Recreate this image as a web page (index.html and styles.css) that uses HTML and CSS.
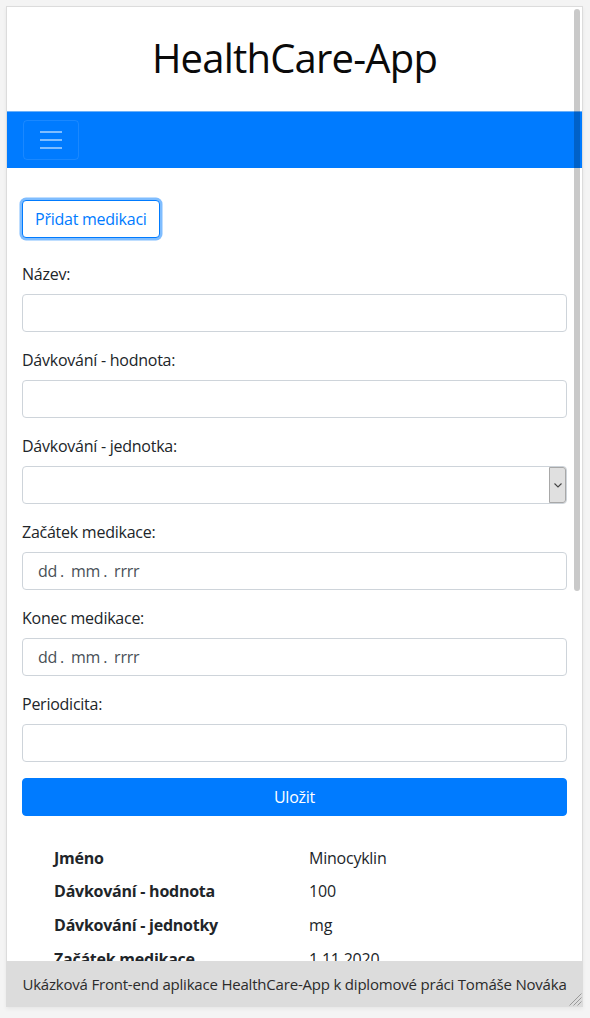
FILE: index.html
```html
<!DOCTYPE html>
<html lang="cs">
<head>
<meta charset="utf-8">
<title>HealthCare-App</title>
<link rel="stylesheet" href="styles.css">
</head>
<body>
<div class="frame">
  <div class="viewport">
    <header class="app-header"><h1 class="app-title">HealthCare-App</h1></header>
    <nav class="navbar">
      <button class="toggler" type="button" aria-label="Menu">
        <svg class="toggler-icon" width="30" height="30" viewBox="0 0 30 30"><path d="M4 7h22M4 15h22M4 23h22" stroke="rgba(255,255,255,0.5)" stroke-width="2" stroke-linecap="butt" fill="none"/></svg>
      </button>
    </nav>
    <main class="container">
      <button class="btn btn-outline is-focused" type="button">Přidat medikaci</button>
      <form class="med-form">
        <div class="form-group">
          <label class="form-label">Název:</label>
          <input class="form-control" type="text">
        </div>
        <div class="form-group">
          <label class="form-label">Dávkování - hodnota:</label>
          <input class="form-control" type="text">
        </div>
        <div class="form-group">
          <label class="form-label">Dávkování - jednotka:</label>
          <div class="select-box">
            <select class="select-native"></select>
            <span class="select-arrow"><svg width="8" height="5" viewBox="0 0 8 5"><polyline points="0.5,0.5 4,4 7.5,0.5" fill="none" stroke="#444" stroke-width="1.1"/></svg></span>
          </div>
        </div>
        <div class="form-group">
          <label class="form-label">Začátek medikace:</label>
          <div class="form-control date-control"><span>dd</span><span class="sep">.</span><span>mm</span><span class="sep">.</span><span>rrrr</span></div>
        </div>
        <div class="form-group">
          <label class="form-label">Konec medikace:</label>
          <div class="form-control date-control"><span>dd</span><span class="sep">.</span><span>mm</span><span class="sep">.</span><span>rrrr</span></div>
        </div>
        <div class="form-group">
          <label class="form-label">Periodicita:</label>
          <input class="form-control" type="text">
        </div>
        <button class="btn btn-primary btn-block" type="button">Uložit</button>
      </form>
      <table class="details">
        <tr><th>Jméno</th><td>Minocyklin</td></tr>
        <tr><th>Dávkování - hodnota</th><td>100</td></tr>
        <tr><th>Dávkování - jednotky</th><td>mg</td></tr>
        <tr><th>Začátek medikace</th><td>1.11.2020</td></tr>
        <tr><th>Konec medikace</th><td>1.12.2020</td></tr>
      </table>
    </main>
    <div class="scroll-thumb"></div>
  </div>
  <footer class="footer">
    <span class="footer-text">Ukázková Front-end aplikace HealthCare-App k diplomové práci Tomáše Nováka</span>
    <svg class="grip" width="14" height="14" viewBox="0 0 14 14"><path d="M13.5 1.5L1.5 13.5M13.5 5.5L5.5 13.5M13.5 9.5L9.5 13.5" stroke="#9a9a9a" stroke-width="1" fill="none"/></svg>
  </footer>
</div>
</body>
</html>
```

FILE: styles.css
```css
* { box-sizing: border-box; }

body {
  margin: 0;
  padding: 6px;
  background: #f4f4f4;
  font-family: "Open Sans", "Noto Sans", Arial, sans-serif;
  font-size: 16px;
  line-height: 24px;
  letter-spacing: -0.25px;
  color: #212529;
}

.frame {
  width: 577px;
  height: 1001px;
  border: 1px solid #dcdcdc;
  background: #fff;
  display: flex;
  flex-direction: column;
  box-shadow: 0 2px 4px rgba(0, 0, 0, 0.06);
}

.viewport {
  flex: 1;
  position: relative;
  overflow: hidden;
}

.app-header {
  height: 104px;
  padding-top: 27px;
  text-align: center;
}

.app-title {
  margin: 0;
  font-size: 40px;
  line-height: 48px;
  font-weight: 400;
  letter-spacing: -0.8px;
  color: #0a0a0a;
}

.navbar {
  display: flex;
  align-items: center;
  background: #007bff;
  border-top: 1px solid #6cb0f8;
  padding: 8px 16px;
}

.toggler {
  width: 56px;
  height: 40px;
  padding: 4px 12px;
  border: 1px solid rgba(255, 255, 255, 0.1);
  border-radius: 4px;
  background: transparent;
  display: flex;
  align-items: center;
  justify-content: center;
}

.toggler-icon { display: block; }

.container {
  padding: 32px 15px 0;
}

.btn {
  display: inline-block;
  height: 38px;
  padding: 6px 12px;
  font-family: inherit;
  font-size: 16px;
  line-height: 24px;
  letter-spacing: -0.25px;
  border-radius: 4px;
  border: 1px solid #007bff;
  cursor: pointer;
}

.btn-outline {
  color: #007bff;
  background: #fff;
}

.is-focused {
  box-shadow: 0 0 0 2.5px rgba(0, 123, 255, 0.5);
}

.btn-primary {
  color: #fff;
  background: #007bff;
}

.btn-block {
  display: block;
  width: 100%;
}

.med-form {
  margin-top: 24px;
}

.form-group {
  margin-bottom: 16px;
}

.form-label {
  display: block;
  margin-bottom: 8px;
}

.form-control {
  display: block;
  width: 100%;
  height: 38px;
  padding: 6px 12px;
  font-family: inherit;
  font-size: 16px;
  line-height: 24px;
  color: #495057;
  background: #fff;
  border: 1px solid #ced4da;
  border-radius: 4px;
}

.date-control {
  display: flex;
  padding-left: 15px;
  color: #495057;
}

.date-control .sep {
  margin: 0 7px 0 3px;
}

.select-box {
  display: flex;
  height: 38px;
  border: 1px solid #ced4da;
  border-radius: 4px;
  background: #fff;
}

.select-native {
  flex: 1;
  border: 0;
  background: transparent;
  -webkit-appearance: none;
  appearance: none;
  font-family: inherit;
  font-size: 16px;
}

.select-arrow {
  width: 17px;
  display: flex;
  align-items: center;
  justify-content: center;
  background: #e0e0e0;
  border: 1px solid #a8a8a8;
  border-radius: 0 3px 3px 0;
}

.details {
  width: 90%;
  margin: 25px auto 0;
  border-collapse: collapse;
}

.details th,
.details td {
  padding: 4.8px;
  text-align: left;
  vertical-align: top;
}

.details th {
  width: 52%;
  font-weight: 700;
}

.scroll-thumb {
  position: absolute;
  top: 2px;
  right: 2px;
  width: 6px;
  height: 582px;
  border-radius: 3px;
  background: rgba(0, 0, 0, 0.21);
}

.footer {
  position: relative;
  height: 45px;
  flex-shrink: 0;
  background: #dcdcdc;
  display: flex;
  align-items: center;
  justify-content: center;
  color: #2b2b2b;
  white-space: nowrap;
}

.footer-text {
  font-size: 15px;
  letter-spacing: -0.2px;
}

.grip {
  position: absolute;
  right: 0;
  bottom: 0;
}
```
